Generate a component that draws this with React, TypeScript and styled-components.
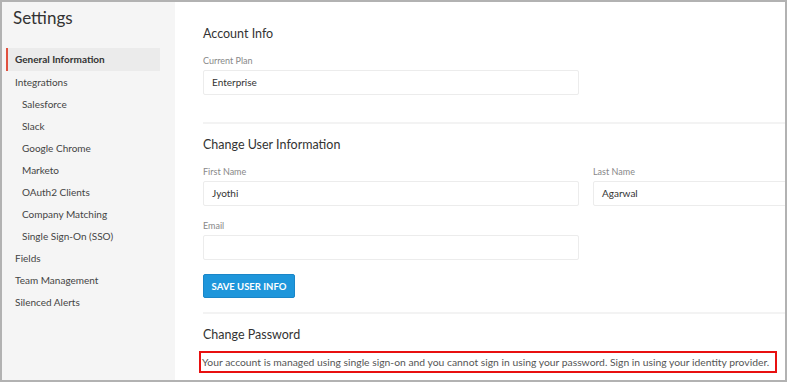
import styled, { createGlobalStyle } from 'styled-components';

const GlobalStyle = createGlobalStyle`
  * { box-sizing: border-box; }
  body {
    margin: 0;
    background: #fff;
    font-family: Lato, "Open Sans", sans-serif;
    color: #333;
  }
`;

const subItems = [
  'Salesforce',
  'Slack',
  'Google Chrome',
  'Marketo',
  'OAuth2 Clients',
  'Company Matching',
  'Single Sign-On (SSO)',
];

function App() {
  return (
    <>
      <GlobalStyle />
      <Frame>
        <Sidebar>
          <Title>Settings</Title>
          <Nav>
            <NavItem $active>General Information</NavItem>
            <NavItem>Integrations</NavItem>
            {subItems.map((s) => (
              <NavItem key={s} $sub>
                {s}
              </NavItem>
            ))}
            <NavItem>Fields</NavItem>
            <NavItem>Team Management</NavItem>
            <NavItem>Silenced Alerts</NavItem>
          </Nav>
        </Sidebar>
        <Main>
          <Section $bottom={27}>
            <SectionTitle>Account Info</SectionTitle>
            <Field>
              <Label>Current Plan</Label>
              <Input>Enterprise</Input>
            </Field>
          </Section>
          <Divider />
          <Section $bottom={14}>
            <SectionTitle>Change User Information</SectionTitle>
            <Row>
              <Field>
                <Label>First Name</Label>
                <Input>Jyothi</Input>
              </Field>
              <Field>
                <Label>Last Name</Label>
                <Input>Agarwal</Input>
              </Field>
            </Row>
            <Field>
              <Label>Email</Label>
              <Input />
            </Field>
            <Button>SAVE USER INFO</Button>
          </Section>
          <Divider />
          <Section $bottom={0}>
            <SectionTitle>Change Password</SectionTitle>
            <Notice>
              Your account is managed using single sign-on and you cannot sign in using your
              password. Sign in using your identity provider.
            </Notice>
          </Section>
        </Main>
      </Frame>
    </>
  );
}

const Frame = styled.div`
  width: 787px;
  height: 382px;
  border: 2px solid #b2b2b2;
  display: flex;
  overflow: hidden;
`;

const Sidebar = styled.aside`
  width: 173px;
  flex-shrink: 0;
  background: #f5f5f5;
  padding: 5px 0 0 4px;
`;

const Title = styled.h1`
  margin: 0 0 0 7px;
  font-size: 17px;
  font-weight: 400;
  color: #333;
  line-height: 22px;
`;

const Nav = styled.ul`
  list-style: none;
  margin: 19px 0 0;
  padding: 0;
  width: 154px;
`;

const NavItem = styled.li<{ $active?: boolean; $sub?: boolean }>`
  height: ${(p) => (p.$active ? '23px' : '22px')};
  line-height: ${(p) => (p.$active ? '23px' : '22px')};
  font-size: 10px;
  color: ${(p) => (p.$active ? '#333' : '#444')};
  padding-left: ${(p) => (p.$sub ? '14px' : '7px')};
  font-weight: ${(p) => (p.$active ? 700 : 400)};
  background: ${(p) => (p.$active ? '#ebebeb' : 'transparent')};
  border-left: 2px solid ${(p) => (p.$active ? '#e0513f' : 'transparent')};
  white-space: nowrap;
`;

const Main = styled.main`
  flex: 1;
  padding: 21px 0 0 28px;
  display: flex;
  flex-direction: column;
  overflow: hidden;
`;

const Section = styled.section<{ $bottom: number }>`
  display: flex;
  flex-direction: column;
  align-items: flex-start;
  gap: 14px;
  padding-bottom: ${(p) => p.$bottom}px;
`;

const SectionTitle = styled.h2`
  margin: 0 0 -2px;
  font-size: 12.5px;
  font-weight: 400;
  color: #333;
  line-height: 18px;
  padding-top: 2px;
`;

const Row = styled.div`
  display: grid;
  grid-template-columns: 376px 376px;
  column-gap: 14px;
`;

const Field = styled.div`
  display: flex;
  flex-direction: column;
  gap: 3px;
`;

const Label = styled.label`
  font-size: 9px;
  line-height: 12px;
  color: #888;
`;

const Input = styled.div`
  width: 376px;
  height: 25px;
  border: 1px solid #ececec;
  border-radius: 2px;
  background: #fff;
  padding-left: 8px;
  font-size: 10px;
  line-height: 23px;
  color: #333;
`;

const Divider = styled.hr`
  margin: 0 0 10px;
  border: none;
  border-top: 2px solid #f3f3f3;
`;

const Button = styled.button`
  width: 92px;
  height: 24px;
  border: 1px solid #1a86c8;
  border-radius: 2px;
  background: #1e96db;
  color: #fff;
  font-family: Lato, sans-serif;
  font-size: 9.5px;
  font-weight: 700;
  padding: 0;
`;

const Notice = styled.p`
  margin: -5px 0 0 -4px;
  width: 578px;
  height: 22px;
  border: 2px solid #e81010;
  padding: 0 0 0 1px;
  font-size: 10.35px;
  color: #555;
  line-height: 18px;
  white-space: nowrap;
`;

export default App;
